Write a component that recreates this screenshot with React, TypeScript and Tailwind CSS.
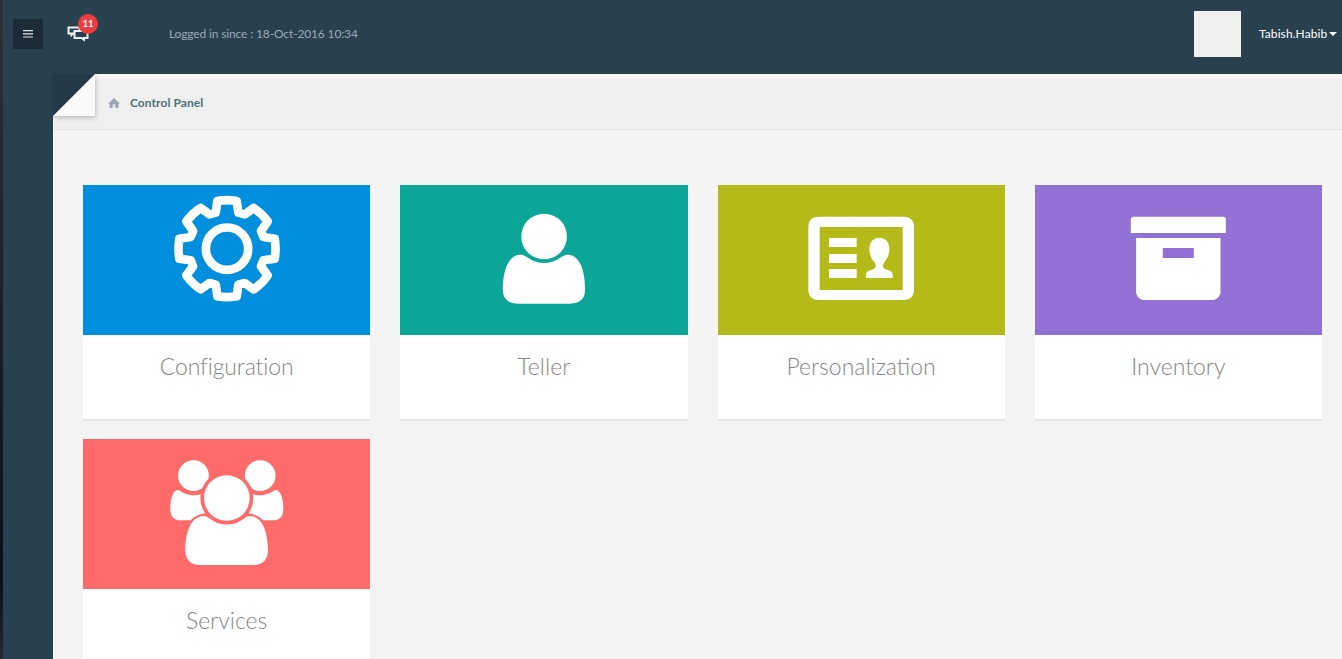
import type { ReactNode } from "react";

type Tile = { title: string; color: string; viewBox: string; icon: ReactNode; spacing: string };

const tiles: Tile[] = [
  {
    title: "Configuration",
    color: "bg-[#008fdc]",
    viewBox: "5.9 0 450 450",
    spacing: "tracking-[-0.12px]",
    icon: (
      <g fill="none" stroke="#fff" strokeWidth="26" strokeLinejoin="round">
        <circle cx="231" cy="191" r="63.5" />
        <path d="M202 48Q231 43 260 48L265 83L284 88L311 69Q336 86 353 109L333 138L340 156L374 161Q379 191 374 221L340 226L333 244L353 271Q336 296 311 313L284 294L265 299L260 334Q231 339 202 334L197 299L178 294L152 313Q126 296 109 271L129 244L122 226L88 221Q83 191 88 161L122 156L129 138L109 109Q126 86 152 69L178 88L197 83Z" />
      </g>
    ),
  },
  {
    title: "Teller",
    color: "bg-[#0ca698]",
    viewBox: "-33.3 -45 450 450",
    spacing: "tracking-[0.1px]",
    icon: (
      <g fill="#fff">
        <circle cx="192" cy="109.500" r="68.500" />
        <path d="M122 164Q131 164 139 170Q192 208 245 170Q253 164 262 164C302 164 315 218 315 268Q315 311 269 311H114Q68 311 68 268C68 218 82 164 122 164Z" />
      </g>
    ),
  },
  {
    title: "Personalization",
    color: "bg-[#b4ba18]",
    viewBox: "17.9 -45 450 450",
    spacing: "tracking-[0px]",
    icon: (
      <g fill="#fff">
        <path fillRule="evenodd" d="M117 50H370Q402 50 402 82V268Q402 300 370 300H117Q85 300 85 268V82Q85 50 117 50ZM119 81V270H368V81Z" />
        <path d="M147 114H230V141H147ZM147 162H230V189H147ZM147 207H230V234H147Z" />
        <path d="M298 113C318 113 328 128 328 147C328 165 321 177 312 188C304 199 310 207 322 210Q338 214 338 224V234H258V224Q258 214 274 210C286 207 291 199 284 188C275 177 268 165 268 147C268 128 278 113 298 113Z" />
      </g>
    ),
  },
  {
    title: "Inventory",
    color: "bg-[#9171d3]",
    viewBox: "9.6 -45 450 450",
    spacing: "tracking-[0px]",
    icon: (
      <g fill="#fff">
        <path d="M101 50H370Q378 50 378 58V99H93V58Q93 50 101 50Z" />
        <path fillRule="evenodd" d="M109 114H362V280Q358 296 342 300H129Q113 296 109 280ZM189 144V174H282V144Z" />
      </g>
    ),
  },
  {
    title: "Services",
    color: "bg-[#ff6b6b]",
    viewBox: "6 27 450 450",
    spacing: "tracking-[0px]",
    icon: (
      <g fill="#fff">
        <circle cx="130.500" cy="137" r="46" />
        <circle cx="330.500" cy="137" r="46" />
        <path d="M83 180Q87 180 91 183Q122 203 155 192Q149 223 168 249Q138 253 122 271H94Q62 271 61 239C61 211 67 181 83 180Z" />
        <path d="M378 180Q374 180 370 183Q339 203 306 192Q312 223 293 249Q323 253 339 271H367Q399 271 400 239C400 211 394 181 378 180Z" />
        <path d="M161 258Q169 258 177 264Q230 302 283 264Q291 258 299 258C340 259 354 312 354 362Q352 405 308 405H153Q108 405 106 362C106 312 120 259 161 258Z" />
        <circle cx="230.500" cy="204" r="74" fill="none" stroke="#ff6b6b" strokeWidth="11" />
        <circle cx="230.500" cy="204" r="68.500" />
      </g>
    ),
  },
];

function ChatIcon() {
  return (
    <svg width="22" height="17" viewBox="0 0 22 17" fill="none" stroke="#edf1f3" strokeWidth="2">
      <path d="M7 7.500H6L4.500 9V7.500H1.500V1.500H12.500V4" />
      <path d="M7.500 5H20.500V12H17V13.800L14.500 12H7.500Z" />
    </svg>
  );
}

function Header() {
  return (
    <header className="flex h-[74px] w-full shrink-0 items-start bg-[#29414e] text-white">
      <button className="mt-[19px] ml-[10px] flex size-[30px] items-center justify-center bg-[#1c2c36]" aria-label="Menu">
        <svg width="10" height="10" viewBox="0 0 10 10" fill="#dfe3e4">
          <path d="M0 1H10V2.200H0ZM0 4.200H10V5.400H0ZM0 7.400H10V8.600H0Z" />
        </svg>
      </button>
      <div className="relative mt-[26px] ml-6 w-[22px]">
        <ChatIcon />
        <span className="absolute -top-3 left-[11px] flex size-5 items-center justify-center rounded-full bg-[#ed3c3f] text-[9.500px] leading-none font-bold">
          11
        </span>
      </div>
      <span className="mt-[26px] ml-20 text-[12px] leading-4 tracking-[-0.14px] text-[#9ca9b8]">
        Logged in since : 18-Oct-2016 10:34
      </span>
      <div className="mt-[11px] ml-auto h-[46px] w-[47px] bg-[#f0f0f0]" />
      <button className="mt-[26px] mr-[5px] ml-[18px] flex w-[78px] items-center justify-between text-[12px] leading-4 whitespace-nowrap">
        <span className="tracking-[0.08px]">Tabish.Habib</span>
        <svg width="8" height="4" viewBox="0 0 8 4" fill="#fff">
          <path d="M0 0H8L4 4Z" />
        </svg>
      </button>
    </header>
  );
}

function Breadcrumb() {
  return (
    <div className="flex h-14 shrink-0 items-start border-t-[5px] border-b border-t-[#f5f5f5] border-b-[#e4e4e4] bg-[#efefef]">
      <svg className="-mt-[5px] overflow-visible drop-shadow-[1px_2px_2px_rgba(0,0,0,0.2)]" width="42" height="42" viewBox="0 0 42 42">
        <path d="M0 0H42V42H0Z" fill="#fbfafb" />
        <path d="M0 0H42L0 42Z" fill="#243947" />
      </svg>
      <svg className="mt-[19px] ml-[13px]" width="12" height="10" viewBox="0 0 12 10" fill="#9ca5b4">
        <path d="M6 0L12 5.800H10.400V10H7.300V6.300H4.700V10H1.600V5.800H0Z" />
      </svg>
      <span className="mt-4 ml-[10px] text-[12px] leading-4 font-bold tracking-[0.06px] text-[#4c7375]">Control Panel</span>
    </div>
  );
}

function TileCard({ tile }: { tile: Tile }) {
  return (
    <a className="flex h-[236px] flex-col border-b-2 border-[#e7e7e7] bg-white">
      <div className={`flex h-[150px] shrink-0 justify-center ${tile.color}`}>
        <svg width="150" height="150" viewBox={tile.viewBox}>
          {tile.icon}
        </svg>
      </div>
      <h2 className={`mt-[15px] text-center text-[23px] leading-8 font-light text-[#858585] ${tile.spacing}`}>{tile.title}</h2>
    </a>
  );
}

export default function App() {
  return (
    <div className="flex h-screen overflow-hidden bg-[#f4f4f4] font-['Lato',sans-serif]">
      <div className="w-[3px] shrink-0 bg-linear-to-b from-[#302f33] from-5% via-[#07111b] via-88% to-[#252735]" />
      <div className="flex min-w-0 flex-1 flex-col">
        <Header />
        <div className="flex min-h-0 flex-1">
          <aside className="w-[50px] shrink-0 bg-[#29414e]" />
          <main className="min-w-0 flex-1">
            <Breadcrumb />
            <div className="grid grid-cols-4 gap-x-[30px] gap-y-[18px] pt-[55px] pr-5 pl-[30px]">
              {tiles.map((tile) => (
                <TileCard key={tile.title} tile={tile} />
              ))}
            </div>
          </main>
        </div>
      </div>
    </div>
  );
}
